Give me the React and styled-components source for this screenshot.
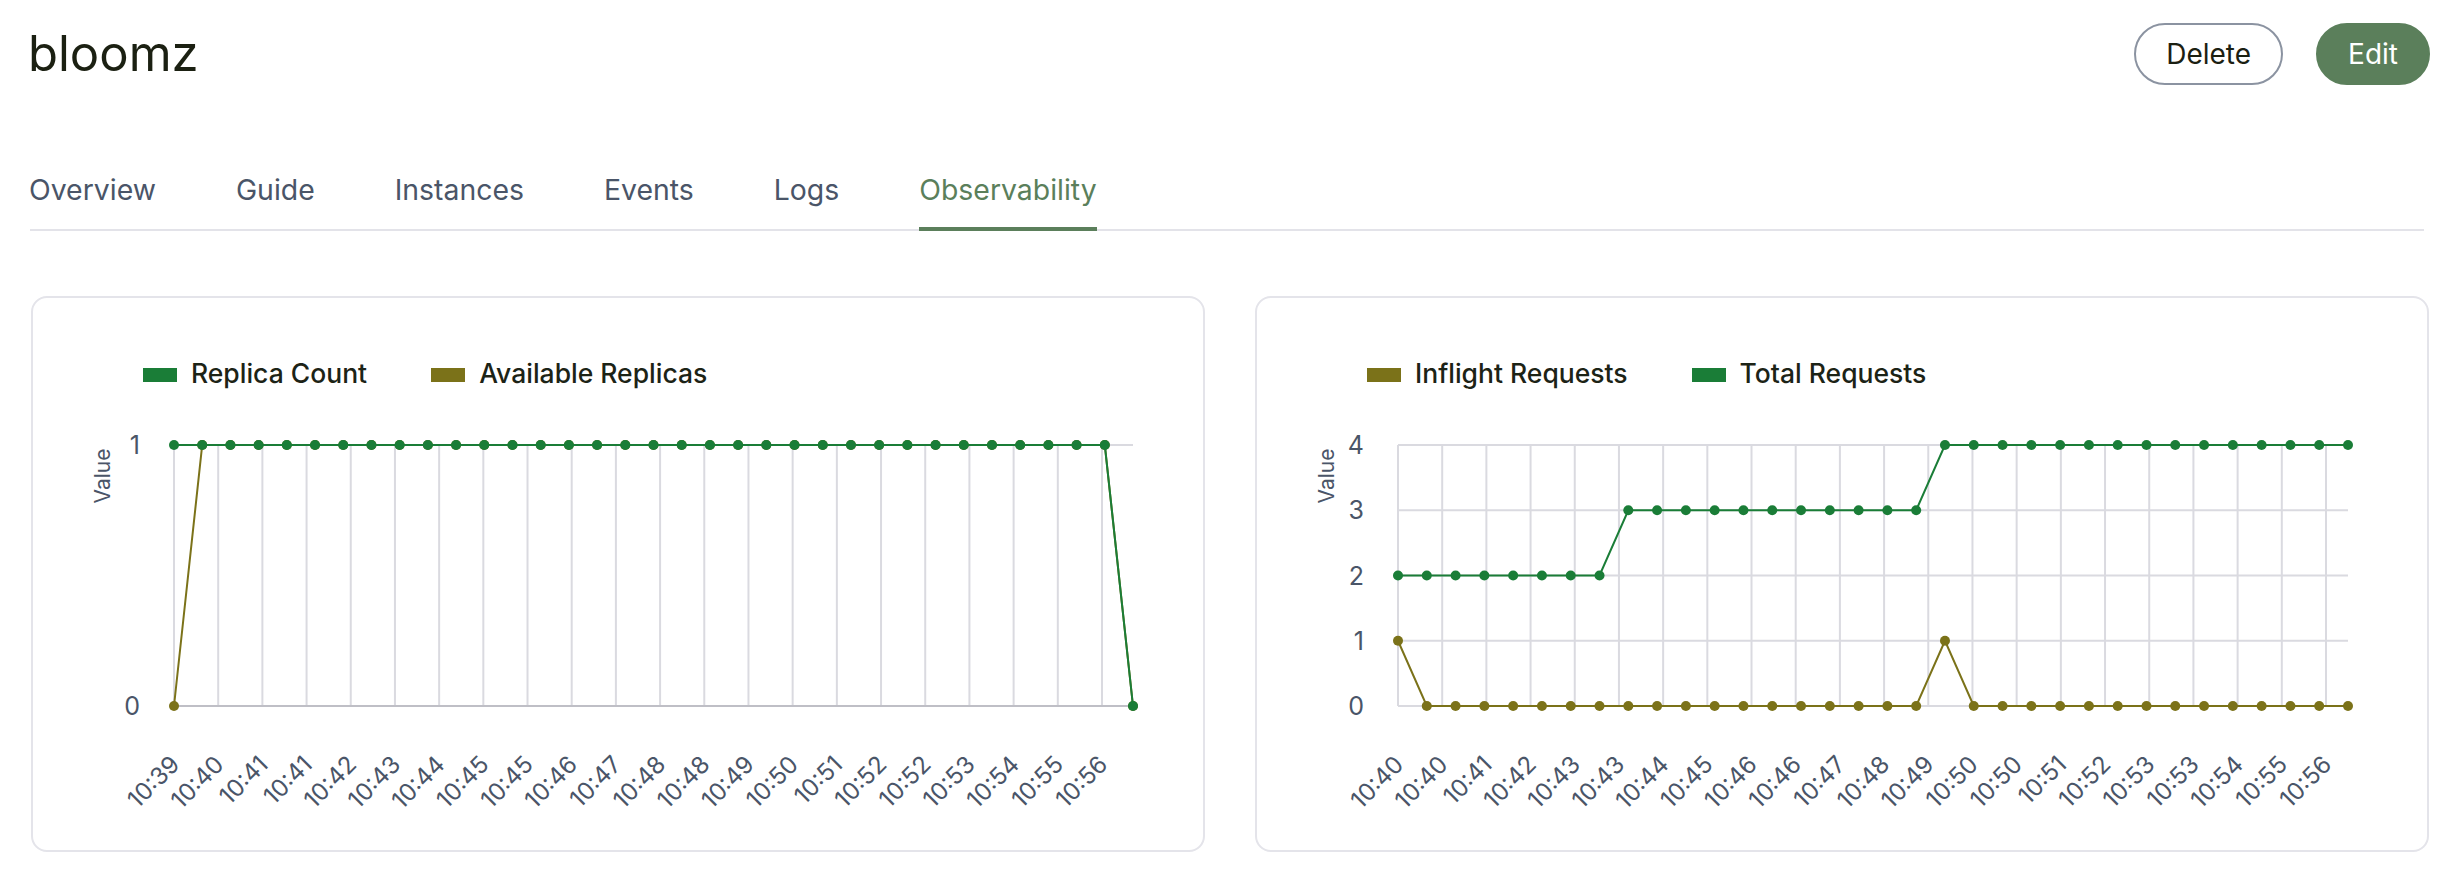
import React from "react";
import styled, { createGlobalStyle } from "styled-components";

const GlobalStyle = createGlobalStyle`
  body {
    margin: 0;
    background: #ffffff;
    font-family: Inter, "Noto Sans", "Liberation Sans", sans-serif;
  }
`;

const Page = styled.div`
  padding: 23px 23px 0 30px;
`;

const Header = styled.div`
  display: flex;
  align-items: center;
  justify-content: space-between;
`;

const Title = styled.h1`
  margin: 0;
  font-size: 49px;
  font-weight: 400;
  line-height: 58px;
  color: #1b2012;
  margin-left: -2px;
`;

const Actions = styled.div`
  display: flex;
  gap: 33px;
  margin-right: -1px;
`;

const Button = styled.button`
  height: 62px;
  padding: 0 30px;
  border-radius: 31px;
  font-family: inherit;
  font-size: 28px;
  cursor: pointer;
  border: 2px solid ${({ $primary }) => ($primary ? "#5b7f5b" : "#8b93a1")};
  background: ${({ $primary }) => ($primary ? "#5b7f5b" : "#ffffff")};
  color: ${({ $primary }) => ($primary ? "#ffffff" : "#1b2012")};
`;

const Tabs = styled.nav`
  display: flex;
  gap: 81px;
  margin-top: 88px;
  border-bottom: 2px solid #e3e3e9;
  margin-right: 5px;
`;

const Tab = styled.div`
  font-size: 28.4px;
  line-height: 33px;
  padding-bottom: 21px;
  margin-bottom: -2px;
  color: ${({ $active }) => ($active ? "#5b7f5b" : "#4a5568")};
  border-bottom: 4px solid ${({ $active }) => ($active ? "#5b7f5b" : "transparent")};
  margin-left: -1px;
`;

const Cards = styled.div`
  display: grid;
  grid-template-columns: 1fr 1fr;
  gap: 50px;
  margin-top: 65px;
  margin-left: 1px;
`;

const Card = styled.div`
  border: 2px solid #e4e4ea;
  border-radius: 16px;
  padding-top: 58px;
  background: #ffffff;
`;

const Legend = styled.div`
  display: flex;
  align-items: center;
  gap: 64px;
  padding-left: 110px;
  height: 34px;
`;

const LegendItem = styled.div`
  display: flex;
  align-items: center;
  gap: 14px;
  font-size: 26.5px;
  font-weight: 500;
  color: #1c2316;
  line-height: 34px;
`;

const Swatch = styled.span`
  width: 34px;
  height: 14px;
  background: ${({ $color }) => $color};
  margin-top: 3px;
`;

const ChartSvg = styled.svg`
  display: block;
  width: 100%;
  height: 460px;
  font-family: Inter, "Noto Sans", "Liberation Sans", sans-serif;
`;

const GREEN = "#1a7d37";
const OLIVE = "#7b7219";
const GRID = "#dadae0";
const AXIS = "#bfbfc6";
const TICK = "#4a5568";

const X0 = 141;
const Y_TOP = 55;
const Y_BOTTOM = 316;
const TICK_STEP = 44.19;

function LineChart({ ticks, datasets, count, xEnd, yMax, axisColor }) {
  const step = (xEnd - X0) / (count - 1);
  const yOf = (v) => Y_BOTTOM - (v / yMax) * (Y_BOTTOM - Y_TOP);
  const yValues = Array.from({ length: yMax + 1 }, (_, i) => i);

  return (
    <ChartSvg>
      {ticks.map((_, k) => (
        <line
          key={`v${k}`}
          x1={X0 + k * TICK_STEP}
          x2={X0 + k * TICK_STEP}
          y1={Y_TOP}
          y2={Y_BOTTOM}
          stroke={GRID}
          strokeWidth="2"
        />
      ))}
      {yValues.map((v) => (
        <line
          key={`h${v}`}
          x1={X0}
          x2={xEnd}
          y1={yOf(v)}
          y2={yOf(v)}
          stroke={v === 0 ? axisColor : GRID}
          strokeWidth="2"
        />
      ))}
      {yValues.map((v) => (
        <text
          key={`yl${v}`}
          x="107"
          y={yOf(v)}
          textAnchor="end"
          dominantBaseline="central"
          fontSize="25"
          fill={TICK}
        >
          {v}
        </text>
      ))}
      <text
        transform="translate(69 86) rotate(-90)"
        textAnchor="middle"
        dominantBaseline="central"
        fontSize="21"
        fill={TICK}
      >
        Value
      </text>
      {ticks.map((label, k) => (
        <text
          key={`xl${k}`}
          transform={`translate(${X0 + k * TICK_STEP + 7} 376) rotate(-45)`}
          textAnchor="end"
          fontSize="24"
          fill={TICK}
        >
          {label}
        </text>
      ))}
      {[...datasets].reverse().map((ds) => (
        <g key={ds.label}>
          <polyline
            points={ds.data.map((v, i) => `${X0 + i * step},${yOf(v)}`).join(" ")}
            fill="none"
            stroke={ds.color}
            strokeWidth="2"
          />
          {ds.data.map((v, i) => (
            <circle key={i} cx={X0 + i * step} cy={yOf(v)} r="5" fill={ds.color} />
          ))}
        </g>
      ))}
    </ChartSvg>
  );
}

const leftTicks = [
  "10:39", "10:40", "10:41", "10:41", "10:42", "10:43", "10:44", "10:45",
  "10:45", "10:46", "10:47", "10:48", "10:48", "10:49", "10:50", "10:51",
  "10:52", "10:52", "10:53", "10:54", "10:55", "10:56",
];

const rightTicks = [
  "10:40", "10:40", "10:41", "10:42", "10:43", "10:43", "10:44", "10:45",
  "10:46", "10:46", "10:47", "10:48", "10:49", "10:50", "10:50", "10:51",
  "10:52", "10:53", "10:53", "10:54", "10:55", "10:56",
];

const replicaCount = [...Array(34).fill(1), 0];
const availableReplicas = [0, ...Array(33).fill(1), 0];

const totalRequests = [...Array(8).fill(2), ...Array(11).fill(3), ...Array(15).fill(4)];
const inflightRequests = Array.from({ length: 34 }, (_, i) => (i === 0 || i === 19 ? 1 : 0));

const replicaSets = [
  { label: "Replica Count", color: GREEN, data: replicaCount },
  { label: "Available Replicas", color: OLIVE, data: availableReplicas },
];

const requestSets = [
  { label: "Inflight Requests", color: OLIVE, data: inflightRequests },
  { label: "Total Requests", color: GREEN, data: totalRequests },
];

const tabs = ["Overview", "Guide", "Instances", "Events", "Logs", "Observability"];

function ChartCard({ datasets, ticks, count, xEnd, yMax, axisColor }) {
  return (
    <Card>
      <Legend>
        {datasets.map((ds) => (
          <LegendItem key={ds.label}>
            <Swatch $color={ds.color} />
            {ds.label}
          </LegendItem>
        ))}
      </Legend>
      <LineChart
        ticks={ticks}
        datasets={datasets}
        count={count}
        xEnd={xEnd}
        yMax={yMax}
        axisColor={axisColor}
      />
    </Card>
  );
}

export default function App() {
  return (
    <>
      <GlobalStyle />
      <Page>
        <Header>
          <Title>bloomz</Title>
          <Actions>
            <Button>Delete</Button>
            <Button $primary>Edit</Button>
          </Actions>
        </Header>
        <Tabs>
          {tabs.map((t) => (
            <Tab key={t} $active={t === "Observability"}>
              {t}
            </Tab>
          ))}
        </Tabs>
        <Cards>
          <ChartCard
            datasets={replicaSets}
            ticks={leftTicks}
            count={35}
            xEnd={1100}
            yMax={1}
            axisColor={AXIS}
          />
          <ChartCard
            datasets={requestSets}
            ticks={rightTicks}
            count={34}
            xEnd={1091}
            yMax={4}
            axisColor={GRID}
          />
        </Cards>
      </Page>
    </>
  );
}
